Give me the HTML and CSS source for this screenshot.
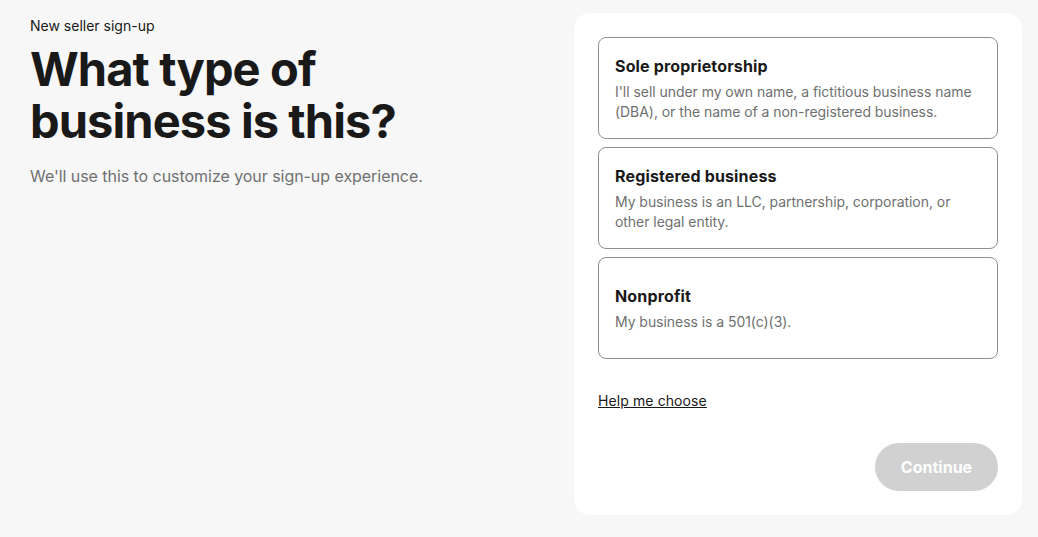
FILE: index.html
```html
<!DOCTYPE html>
<html lang="en">
<head>
<meta charset="utf-8">
<title>New seller sign-up</title>
<link rel="stylesheet" href="styles.css">
</head>
<body>
<div class="page">
  <section class="intro">
    <div class="eyebrow">New seller sign-up</div>
    <h1 class="title"><span class="line">What type of</span><span class="line">business is this?</span></h1>
    <p class="subtitle">We'll use this to customize your sign-up experience.</p>
  </section>
  <section class="panel">
    <div class="options">
      <div class="option">
        <div class="option-title">Sole proprietorship</div>
        <div class="option-desc">I'll sell under my own name, a fictitious business name (DBA), or the name of a non-registered business.</div>
      </div>
      <div class="option">
        <div class="option-title">Registered business</div>
        <div class="option-desc">My business is an LLC, partnership, corporation, or other legal entity.</div>
      </div>
      <div class="option">
        <div class="option-title">Nonprofit</div>
        <div class="option-desc">My business is a 501(c)(3).</div>
      </div>
    </div>
    <a class="help" href="#">Help me choose</a>
    <div class="actions">
      <button class="continue" disabled>Continue</button>
    </div>
  </section>
</div>
</body>
</html>
```
FILE: styles.css
```css
* { box-sizing: border-box; }
html, body {
  margin: 0;
  background: #f7f7f7;
  font-family: Inter, "Noto Sans", "Liberation Sans", sans-serif;
  color: #191919;
}
.page {
  display: flex;
  align-items: flex-start;
  padding: 13px 16px 22px 30px;
  height: 537px;
}
.intro {
  flex: 1;
  padding-top: 3px;
}
.eyebrow {
  font-size: 14px;
  line-height: 20px;
}
.title {
  margin: 8px 0 0;
  font-size: 47px;
  font-weight: 700;
  letter-spacing: -0.9px;
  display: flex;
  flex-direction: column;
  gap: 2px;
}
.title .line {
  display: block;
  line-height: 50px;
}
.subtitle {
  margin: 18px 0 0;
  font-size: 16px;
  line-height: 24px;
  letter-spacing: -0.05px;
  color: #707070;
}
.panel {
  width: 448px;
  height: 502px;
  background: #fff;
  border-radius: 16px;
  padding: 24px;
  display: flex;
  flex-direction: column;
}
.options {
  display: flex;
  flex-direction: column;
  gap: 8px;
}
.option {
  border: 1px solid #8f8f8f;
  border-radius: 8px;
  min-height: 102px;
  padding: 16px;
  display: flex;
  flex-direction: column;
  justify-content: center;
}
.option-title {
  font-size: 16px;
  line-height: 22px;
  font-weight: 700;
  letter-spacing: 0.15px;
}
.option-desc {
  margin-top: 5px;
  font-size: 14px;
  line-height: 20px;
  letter-spacing: -0.05px;
  color: #707070;
}
.help {
  align-self: flex-start;
  margin-top: 32px;
  font-size: 14px;
  line-height: 20px;
  letter-spacing: 0.1px;
  color: #191919;
  text-decoration: underline;
}
.actions {
  margin-top: 32px;
  display: flex;
  justify-content: flex-end;
}
.continue {
  width: 123px;
  height: 48px;
  border: none;
  border-radius: 24px;
  background: #d1d1d1;
  color: #fff;
  font-family: inherit;
  font-size: 16px;
  font-weight: 700;
}
```
